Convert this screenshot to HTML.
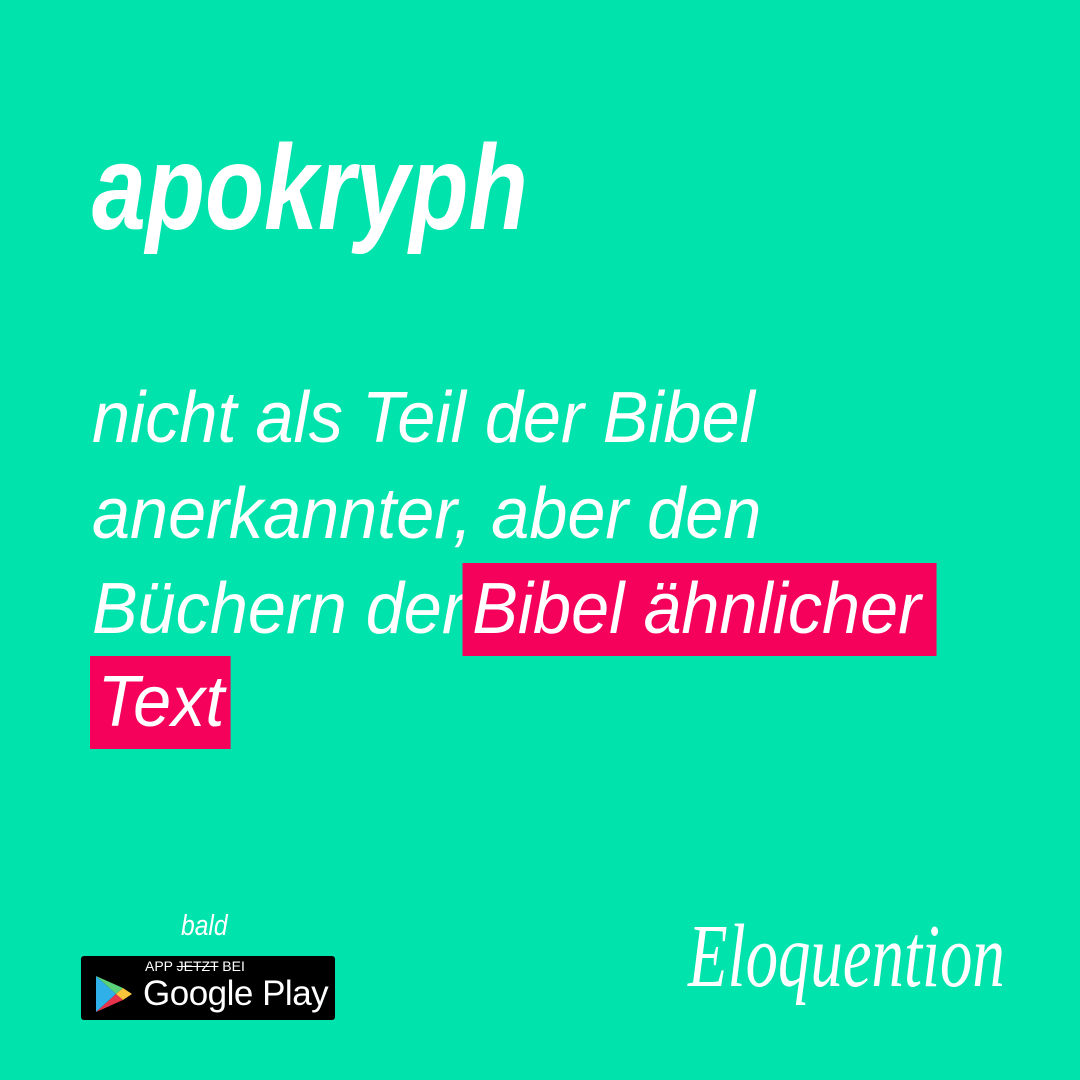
<!DOCTYPE html>
<html><head><meta charset="utf-8"><style>
html,body{margin:0;padding:0}
body{width:1080px;height:1080px;background:#00e3ad;position:relative;overflow:hidden;font-family:"Liberation Sans",sans-serif;color:#fff}
.t{position:absolute;white-space:nowrap;transform-origin:0 0}
.title{left:92px;top:117px;font-size:121px;font-weight:bold;font-style:italic;transform:scaleX(0.8)}
.l{left:92px;font-size:72px;font-style:italic;transform:scaleX(0.95);line-height:96px}
.hl{background:#f5005a;padding:6px 8px 7px 8px}
</style></head><body>
<div class="t title">apokryph</div>
<div class="t l" style="top:370px">nicht als Teil der Bibel</div>
<div class="t l" style="top:466px">anerkannter, aber den</div>
<div class="t l" style="top:561px">Büchern der<span class="hl" style="margin-left:-2px;padding-left:10px;padding-right:16px">Bibel ähnlicher</span></div>
<div class="t l" style="top:654px;left:90px"><span class="hl" style="padding:6px 7px 7px 8px">Text</span></div>

<div class="t" style="left:181px;top:910px;font-size:29px;font-style:italic;transform:scaleX(0.85)">bald</div>
<div style="position:absolute;left:81px;top:956px;width:254px;height:64px;background:#000;border-radius:3px"></div>
<div class="t" style="left:145px;top:958px;font-size:14px">APP <s>JETZT</s> BEI</div>
<div class="t" style="left:143px;top:974px;font-size:35px;letter-spacing:-0.5px">Google Play</div>
<svg style="position:absolute;left:94px;top:974px" width="40" height="40" viewBox="0 0 40 40">
<polygon points="2,2 22,20 2,38" fill="#2fb0e8"/>
<polygon points="2,2 22,20 29,14" fill="#5ad07a"/>
<polygon points="2,38 22,20 29,26" fill="#e8334c"/>
<polygon points="22,20 29,14 38,20 29,26" fill="#f9c53a"/>
</svg>
<div class="t" style="left:688px;top:905px;font-size:90px;font-family:'Liberation Serif',serif;font-style:italic;transform:scaleX(0.72)">Eloquention</div>
</body></html>
